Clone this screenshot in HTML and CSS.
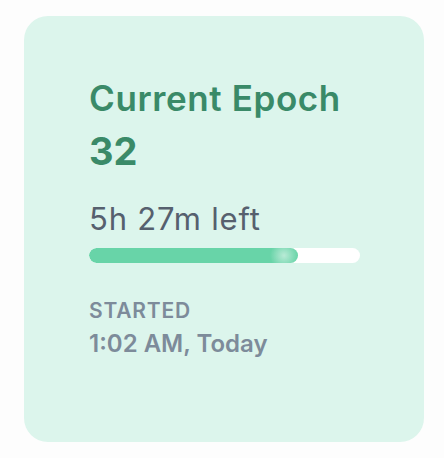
FILE: index.html
```html
<!DOCTYPE html>
<html lang="en">
  <head>
    <meta charset="UTF-8" />
    <title>Current Epoch</title>
    <link rel="stylesheet" href="styles.css">
  </head>
  <body>
    <div class="card-epoch">
      <h2 class="epoch-title">Current Epoch</h2>
      <div class="epoch-number">32</div>

      <div class="epoch-left">5h 27m left</div>
      <div class="progress">
        <div class="progress-fill" style="width: 77%"></div>
      </div>

      <div class="started-label">STARTED</div>
      <div class="started-time">1:02 AM, Today</div>
    </div>
  </body>
</html>
```

FILE: styles.css
```css
body {
  margin: 0;
  padding: 16px 20px 16px 24px;
  background-color: #fdfdfd;
  font-family: Inter, "Noto Sans", sans-serif;
}
.card-epoch {
  width: 400px;
  height: 426px;
  box-sizing: border-box;
  padding: 61px 64px 0 65px;
  background: #dcf5ec;
  border-radius: 24px;
}
.epoch-title {
  margin: 0;
  font-size: 35px;
  font-weight: 600;
  line-height: 42px;
  letter-spacing: 0.6px;
  color: #3a8a68;
}
.epoch-number {
  margin-top: 10px;
  font-size: 38px;
  font-weight: 700;
  line-height: 44px;
  color: #3a8a68;
}
.epoch-left {
  margin-top: 28px;
  font-size: 31px;
  line-height: 36px;
  letter-spacing: 0.8px;
  color: #56606e;
}
.progress {
  margin-top: 11px;
  height: 15px;
  background: #fff;
  border-radius: 8px;
  overflow: hidden;
}
.progress-fill {
  height: 100%;
  border-radius: 8px;
  background:
    radial-gradient(circle at calc(100% - 14px) 50%, #b9ead6 0, rgba(104, 212, 168, 0) 14px),
    #68d4a8;
}
.started-label {
  margin-top: 35px;
  font-size: 21px;
  font-weight: 600;
  line-height: 26px;
  letter-spacing: 0.8px;
  color: #7d8b9a;
}
.started-time {
  margin-top: 5px;
  font-size: 24px;
  font-weight: 600;
  line-height: 30px;
  color: #7d8b9a;
}
```
